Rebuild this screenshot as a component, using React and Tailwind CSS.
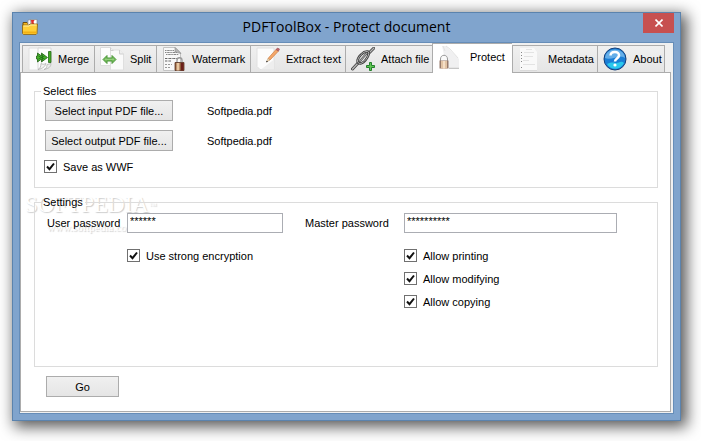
import React, { useState } from 'react';

function FolderIcon() {
  return (
    <svg viewBox="0 0 16 16" className="w-4 h-4 shrink-0" aria-hidden="true">
      <path d="M1 3.500h4l1.500 1.500h8v9h-13.500z" fill="#f6b71c" stroke="#6b4d12" />
      <path d="M6 1.200l3-.7 1 6H6z" fill="#f4f4f6" stroke="#8c8c92" strokeWidth=".6" />
      <path d="M8.500.600h6.500v6.400H9z" fill="#fff" stroke="#777" strokeWidth=".6" />
      <path d="M9 1h3.500l-1 2 1 2.500H9.500z" fill="#dd2f2b" />
      <path d="M.5 6h6.500L8 5h7.500l-.5 9.500-1 1H1.500l-1-1z" fill="#ffcf38" stroke="#8a6212" strokeWidth=".8" />
      <path d="M1.500 7h5.800l1-1H14.500" stroke="#fff2ac" fill="none" />
      <path d="M1.300 12.500h13v2h-13z" fill="#f3b013" />
    </svg>
  );
}

function MergeIcon() {
  return (
    <svg viewBox="0 0 24 24" className="w-6 h-6 shrink-0" aria-hidden="true">
      <path d="M1 1h14v17l-4 5H1z" fill="#fbfbfb" stroke="#e0e0e0" />
      <path d="M10 1h13v15l-7 7h-6z" fill="#fdfdfd" stroke="#d8d8d8" />
      <path d="M10 22.500c2-1 3-3 3-6 2 1 3 1 5 0-1 3-3 5-8 6z" fill="#f2f2f2" stroke="#b0b0b0" strokeWidth=".8" />
      <path d="M16 22.500c2-1 3-2 3-5l4-1c0 3-2 5-7 6z" fill="#ececec" stroke="#b4b4b4" strokeWidth=".8" />
      <path d="M9.500 6l4 3V6l6 4.500-6 4.500v-3l-4 3v-3H8.500V9h1z" fill="#46b02a" stroke="#205f14" strokeWidth=".8" />
      <path d="M10.500 9l6 3M10.500 12l6-3M14.500 7.500v6" stroke="#217016" strokeWidth=".8" />
      <path d="M20.500 4.500h2.500v11h-2.500z" fill="#46ad24" stroke="#23661a" strokeWidth=".8" />
    </svg>
  );
}

function SplitIcon() {
  return (
    <svg viewBox="0 0 24 24" className="w-6 h-6 shrink-0" aria-hidden="true">
      <path d="M.5.500h10l3 3v15H.500z" fill="#fdfdfd" stroke="#dcdcdc" />
      <path d="M10.500 3h9l4 4v16h-13z" fill="#fafafa" stroke="#dfdfdf" />
      <path d="M10.500.500v3h3M19.500 3v4h4" fill="#eee" stroke="#cfcfcf" />
      <path d="M3 12.500l4-4v2.500h5V8.500l4 4-4 4V14H7v2.500z" fill="#72b958" stroke="#4c983b" />
      <path d="M5 12.300h9" stroke="#a4d68f" strokeWidth=".9" />
    </svg>
  );
}

function WatermarkIcon() {
  return (
    <svg viewBox="0 0 24 24" className="w-6 h-6 shrink-0" aria-hidden="true">
      <path d="M1.500.500h12l5 5v18h-17z" fill="#f8f8f8" stroke="#c4c4c4" />
      <path d="M13 .5l6 6-6-1.500z" fill="#b5b5b5" stroke="#8c8c8c" strokeWidth=".6" />
      <path d="M3 3.500h9M3 5.500h12M4 7.500h13" stroke="#888" strokeWidth="1" strokeDasharray="1.500 .7 2.500 .6" fill="none" />
      <path d="M3 11.500h12M3 14h6" stroke="#666" strokeWidth="1" strokeDasharray="2 .6 1 .5" />
      <path d="M3 17.500h7M3 20.500h6" stroke="#999" strokeWidth="1" strokeDasharray="2 1" />
      <path d="M15 16v-3c0-3 5-3 5 0v3" fill="none" stroke="#999" strokeWidth="1.300" />
      <path d="M13 15.500h9v8h-9z" fill="#8f5a38" stroke="#5b3524" strokeWidth=".8" />
      <path d="M14.500 16h3v7.500h-3z" fill="#e8c7a0" />
      <path d="M19 16h2.500v7.500H19z" fill="#6b1f1b" />
    </svg>
  );
}

function ExtractIcon() {
  return (
    <svg viewBox="0 0 24 24" className="w-6 h-6 shrink-0" aria-hidden="true">
      <path d="M1 1h17v21.500H4l-3-3z" fill="#fcfcfc" stroke="#e0e0e0" />
      <path d="M5 22.500h13v-10z" fill="#eee" />
      <path d="M20 2.500l2.500 1.500L14 13l-2-1.500z" fill="#f4a76a" stroke="#cd7c3f" strokeWidth=".7" />
      <path d="M20 2.500l1.500-1.500 2 1-1 2z" fill="#c66569" stroke="#944e57" strokeWidth=".6" />
      <path d="M12 11.500l-1.500 3.500 3.500-2z" fill="#f7dfba" stroke="#ac8c68" strokeWidth=".5" />
      <path d="M10.500 15l.3-1 .7.600z" fill="#333" stroke="#333" strokeWidth=".6" />
    </svg>
  );
}

function AttachIcon() {
  return (
    <svg viewBox="0 0 24 24" className="w-6 h-6 shrink-0" aria-hidden="true">
      <g fill="none" strokeLinecap="round">
        <path d="M1.500 22L8 15M17 7l6-6" stroke="#444" strokeWidth="3" />
        <path d="M1.500 22L8 15M17 7l6-6" stroke="#b9b9b9" strokeWidth="1.200" />
        <path d="M6.500 14c0-4 6-10 10-9.500 4 .5-2 11-7 12-2 0-3-1-3-2.500z" stroke="#3c3c3c" strokeWidth="2.400" />
        <path d="M6.500 14c0-4 6-10 10-9.500 4 .5-2 11-7 12-2 0-3-1-3-2.500z" stroke="#b5b5b5" strokeWidth="1" />
        <path d="M9.500 13.500l6-7" stroke="#555" strokeWidth="2" />
        <path d="M9.500 13.500l6-7" stroke="#ccc" strokeWidth=".8" />
      </g>
      <path d="M18.500 15.500h2v3h3v2h-3v3h-2v-3h-3v-2h3z" fill="#5fc653" stroke="#247f2c" strokeWidth="1" />
    </svg>
  );
}

function ProtectIcon() {
  return (
    <svg viewBox="0 0 24 24" className="w-6 h-6 shrink-0" aria-hidden="true">
      <path d="M4 1h4l13 13v9H9z" fill="#f0f0f1" />
      <path d="M5 1l2 5M8 1l4 3 8 9" stroke="#e2e2e2" fill="none" />
      <path d="M2.500 16v-2c0-5 7-5 7 0v2" fill="#fafafa" stroke="#999" />
      <path d="M1.500 15.500h9v8h-9z" fill="#96796a" />
      <path d="M3 16h6v7.500H3z" fill="#e2c3a4" />
      <path d="M5 16h2v7.500H5z" fill="#f5dfc7" />
      <path d="M11 23.300h10" stroke="#b8b8b8" />
    </svg>
  );
}

function MetadataIcon() {
  return (
    <svg viewBox="0 0 24 24" className="w-6 h-6 shrink-0" aria-hidden="true">
      <path d="M2 1h14l3 4v18H2z" fill="#f9f9f9" />
      <path d="M8 2.500h6M6 5.500h10M6 9.500h9M5 13.500h6M5 17.500h12" stroke="#e3e3e3" />
      <path d="M3.500 5v12M3.500 20v2" stroke="#888" strokeDasharray="1 2" />
      <path d="M2 23.500h17" stroke="#dadada" />
    </svg>
  );
}

function AboutIcon() {
  return (
    <svg viewBox="0 0 24 24" className="w-6 h-6 shrink-0" aria-hidden="true">
      <circle cx="12" cy="12" r="11" fill="#1a7ed6" stroke="#173f78" />
      <path d="M2 11C3-.5 21-.5 22 11c-5-4-14 3-20 0z" fill="#65aee8" />
      <path d="M4 17c3 6 13 7 17-1-3-3-6 1-9 0-3-1-6 0-8 1z" fill="#2bc8ec" />
      <path d="M7.500 8.500c.3-5 9-4.500 8.500 0-.3 3-4 3-4 6" fill="none" stroke="#fff" strokeWidth="2.500" />
      <circle cx="12" cy="18" r="1.600" fill="#fff" />
    </svg>
  );
}

const tabs = [
  { id: 'merge', label: 'Merge', Icon: MergeIcon, width: 'w-[72px]' },
  { id: 'split', label: 'Split', Icon: SplitIcon, width: 'w-[62px]' },
  { id: 'watermark', label: 'Watermark', Icon: WatermarkIcon, width: 'w-[94px]' },
  { id: 'extract', label: 'Extract text', Icon: ExtractIcon, width: 'w-[95px]' },
  { id: 'attach', label: 'Attach file', Icon: AttachIcon, width: 'w-[87px]' },
  { id: 'protect', label: 'Protect', Icon: ProtectIcon, width: 'w-[80px]' },
  { id: 'metadata', label: 'Metadata', Icon: MetadataIcon, width: 'w-[85px]' },
  { id: 'about', label: 'About', Icon: AboutIcon, width: 'w-[68px]' },
];

function CheckBox({ label }) {
  return (
    <label className="flex w-fit items-center gap-1.5">
      <span className="grid h-[13px] w-[13px] shrink-0">
        <input
          type="checkbox"
          defaultChecked
          className="peer col-start-1 row-start-1 h-[13px] w-[13px] appearance-none border border-[#707070] bg-white"
        />
        <svg viewBox="0 0 13 13" className="pointer-events-none invisible col-start-1 row-start-1 h-[13px] w-[13px] peer-checked:visible" aria-hidden="true">
          <path d="M3 6.500l2.500 2.700L10 3.500" fill="none" stroke="#111" strokeWidth="2" />
        </svg>
      </span>
      {label}
    </label>
  );
}

function PushButton({ className, children }) {
  return (
    <button type="button" className={`h-[21px] border border-[#acacac] bg-gradient-to-b from-[#f0f0f0] to-[#e5e5e5] text-center ${className}`}>
      {children}
    </button>
  );
}

function App() {
  const [activeTab, setActiveTab] = useState('protect');

  return (
    <div className="flex min-h-screen flex-col bg-white pt-3 pr-5 pb-5 pl-3 font-['Liberation_Sans',Arial,sans-serif] text-[11px] leading-3 text-black">
      <div className="flex flex-1 flex-col border border-[#5b83ad] bg-[#80a4cd] px-1.5 pb-1.5 shadow-[4px_4px_14px_2px_rgba(0,0,0,0.65)]">
        <header className="flex h-[29px] items-start">
          <div className="flex w-[31px] pt-1.5 pl-[3px]">
            <FolderIcon />
          </div>
          <h1 className="flex-1 pt-1 text-center font-['Open_Sans','Noto_Sans',sans-serif] text-[14px] leading-5">PDFToolBox - Protect document</h1>
          <button type="button" aria-label="Close" className="flex h-5 w-[31px] items-center justify-center bg-[#c75050]">
            <svg viewBox="0 0 8 8" className="h-2 w-2" aria-hidden="true">
              <path d="M.5.500l7 7M7.500.500l-7 7" stroke="#fff" strokeWidth="1.600" />
            </svg>
          </button>
        </header>

        <main className="flex flex-1 flex-col border border-[#668db8] bg-[#f0f0f0] pr-0.5 pb-px">
          <nav role="tablist" className="flex items-end pl-0.5">
            {tabs.map(({ id, label, Icon, width }) => {
              const active = activeTab === id;
              return (
                <button
                  key={id}
                  type="button"
                  role="tab"
                  aria-selected={active}
                  onClick={() => setActiveTab(id)}
                  className={`flex items-center whitespace-nowrap border-t border-l border-[#acacac] pl-[5px] last:border-r ${width} ${
                    active ? 'z-10 -mb-px h-[30px] gap-2 bg-white pb-1' : 'h-[27px] gap-1.5 bg-gradient-to-b from-[#f0f0f0] to-[#e5e5e5]'
                  }`}
                >
                  <Icon />
                  {label}
                </button>
              );
            })}
          </nav>

          <section role="tabpanel" className="relative flex flex-1 flex-col border border-[#acacac] bg-white pt-3 pr-3 pb-3.5 pl-[13px]">
            {/* faint brand mark, sits under the form */}
            <div className="pointer-events-none absolute top-[120px] left-1 font-['Liberation_Serif',serif] text-white [text-shadow:1px_1px_1px_#ccc]" aria-hidden="true">
              <p className="text-[23px] leading-6">SOFTPEDIA<sup className="text-[8px]">™</sup></p>
              <p className="pl-[22px] text-[11px] leading-5">www.softpedia.com</p>
            </div>

            <fieldset className="relative border border-[#dcdcdc] pr-10 pb-3.5 pl-[9px]">
              <legend className="-ml-[3px] px-0.5">Select files</legend>
              <div className="flex items-center gap-[34px] pt-[3px]">
                <PushButton className="ml-px w-32">Select input PDF file...</PushButton>
                <span>Softpedia.pdf</span>
              </div>
              <div className="flex items-center gap-[34px] pt-[9px] pb-[9px]">
                <PushButton className="ml-px w-32">Select output PDF file...</PushButton>
                <span>Softpedia.pdf</span>
              </div>
              <CheckBox label="Save as WWF" />
            </fieldset>

            <fieldset className="relative mt-2 flex-1 border border-[#dcdcdc] pr-10 pl-3">
              <legend className="-ml-1.5 px-0.5">Settings</legend>
              <div className="grid grid-cols-[80px_178fr_99px_213fr] pt-[5px]">
                <label htmlFor="user-password" className="self-center">User password</label>
                <input
                  id="user-password"
                  type="text"
                  defaultValue="******"
                  className="mr-[22px] h-5 min-w-0 border border-[#abadb3] bg-white px-0.5 pb-1"
                />
                <label htmlFor="master-password" className="self-center">Master password</label>
                <input
                  id="master-password"
                  type="text"
                  defaultValue="**********"
                  className="h-5 min-w-0 border border-[#abadb3] bg-white px-0.5 pb-1"
                />
                <div className="col-start-2 pt-4">
                  <CheckBox label="Use strong encryption" />
                </div>
                <div className="col-start-4 flex flex-col gap-2.5 pt-4">
                  <CheckBox label="Allow printing" />
                  <CheckBox label="Allow modifying" />
                  <CheckBox label="Allow copying" />
                </div>
              </div>
            </fieldset>

            <div className="flex pt-[9px] pl-3">
              <PushButton className="w-[73px]">Go</PushButton>
            </div>
          </section>
        </main>
      </div>
    </div>
  );
}

export default App;
